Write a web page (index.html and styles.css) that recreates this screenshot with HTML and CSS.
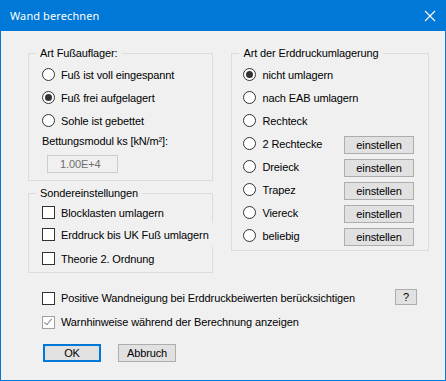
FILE: index.html
```html
<!DOCTYPE html>
<html lang="de">
<head>
    <meta charset="UTF-8">
    <title>Wand berechnen</title>
    <link rel="stylesheet" href="styles.css">
</head>
<body>
    <div class="window">
        <div class="titlebar">
            <span class="title">Wand berechnen</span>
            <svg class="close" width="12" height="12" viewBox="0 0 12 12">
                <path d="M1 1 L11 11 M11 1 L1 11" stroke="#fff" stroke-width="1.1" fill="none"/>
            </svg>
        </div>

        <div class="dialog">
            <div class="columns">
                <div class="col-left">
                    <fieldset class="group group-foot">
                        <legend>Art Fußauflager:</legend>
                        <div class="opt"><span class="radio"></span>Fuß ist voll eingespannt</div>
                        <div class="opt"><span class="radio checked"></span>Fuß frei aufgelagert</div>
                        <div class="opt"><span class="radio"></span>Sohle ist gebettet</div>
                        <div class="field-label">Bettungsmodul ks [kN/m²]:</div>
                        <div class="input disabled">1.00E+4</div>
                    </fieldset>

                    <fieldset class="group group-special">
                        <legend>Sondereinstellungen</legend>
                        <div class="opt"><span class="check"></span>Blocklasten umlagern</div>
                        <div class="opt overlap"><span class="check"></span>Erddruck bis UK Fuß umlagern</div>
                        <div class="opt"><span class="check"></span>Theorie 2. Ordnung</div>
                    </fieldset>
                </div>

                <fieldset class="group group-erd">
                    <legend>Art der Erddruckumlagerung</legend>
                    <div class="opt"><span class="radio checked"></span>nicht umlagern</div>
                    <div class="opt"><span class="radio"></span>nach EAB umlagern</div>
                    <div class="opt"><span class="radio"></span>Rechteck</div>
                    <div class="opt"><span class="radio"></span><span class="grow">2 Rechtecke</span><span class="btn btn-set">einstellen</span></div>
                    <div class="opt"><span class="radio"></span><span class="grow">Dreieck</span><span class="btn btn-set">einstellen</span></div>
                    <div class="opt"><span class="radio"></span><span class="grow">Trapez</span><span class="btn btn-set">einstellen</span></div>
                    <div class="opt"><span class="radio"></span><span class="grow">Viereck</span><span class="btn btn-set">einstellen</span></div>
                    <div class="opt"><span class="radio"></span><span class="grow">beliebig</span><span class="btn btn-set">einstellen</span></div>
                </fieldset>
            </div>

            <div class="extra">
                <div class="opt wide"><span class="check"></span><span class="grow">Positive Wandneigung bei Erddruckbeiwerten berücksichtigen</span><span class="btn btn-help">?</span></div>
                <div class="opt wide"><span class="check checked"></span>Warnhinweise während der Berechnung anzeigen</div>
            </div>

            <div class="actions">
                <span class="btn btn-main default">OK</span>
                <span class="btn btn-main">Abbruch</span>
            </div>
        </div>
    </div>
</body>
</html>
```

FILE: styles.css
```css
body {
    margin: 0;
    background: #f0f0f0;
    font-family: "Liberation Sans", Arial, sans-serif;
    font-size: 11px;
    letter-spacing: -0.12px;
    color: #000;
}
.window {
    width: 446px;
    height: 381px;
    box-sizing: border-box;
    border: 1px solid #0078d7;
    border-top: 0;
    background: #f0f0f0;
}
.titlebar {
    height: 31px;
    background: #0078d7;
    display: flex;
    align-items: center;
    justify-content: space-between;
    padding: 0 9px 0 9px;
    color: #fff;
}
.title {
    font-family: "Noto Sans", "Open Sans", sans-serif;
    font-size: 11px;
    letter-spacing: 0.1px;
}
.dialog {
    padding: 16px 16px 0 27px;
}
.columns {
    display: flex;
    align-items: flex-start;
    gap: 18px;
}
.col-left {
    width: 186px;
    display: flex;
    flex-direction: column;
    gap: 6px;
}
.group {
    margin: 0;
    border: 1px solid #dcdcdc;
    padding: 0 0 0 13px;
    min-width: 0;
}
.group legend {
    margin-left: -6px;
    padding: 0 4px;
    line-height: 13px;
}
.group-foot {
    padding-top: 3px;
    padding-bottom: 7px;
}
.group-special {
    padding-top: 1px;
    padding-bottom: 2px;
}
.group-erd {
    width: 198px;
    box-sizing: border-box;
    padding-left: 11px;
    padding-right: 14px;
    padding-top: 3px;
    padding-bottom: 3px;
}
.group-erd legend {
    margin-left: -4px;
}
.opt {
    height: 23px;
    display: flex;
    align-items: center;
}
/* the control is wider than its group box and hides part of the frame */
.opt.overlap {
    position: relative;
    margin-right: -2px;
    height: 21px;
    margin-top: -1px;
    padding-top: 1px;
    padding-bottom: 2px;
    background: #f0f0f0;
}
.grow {
    flex: 1;
}
.radio, .check {
    width: 13px;
    height: 13px;
    box-sizing: border-box;
    border: 1px solid #333;
    background: #fff;
    margin-right: 6px;
    flex: none;
    position: relative;
}
.radio {
    border-radius: 50%;
}
.radio.checked::after {
    content: "";
    position: absolute;
    left: 2px;
    top: 2px;
    width: 7px;
    height: 7px;
    border-radius: 50%;
    background: #333;
}
.check.checked {
    border-color: #a0a0a0;
}
.check.checked::after {
    content: "";
    position: absolute;
    left: 3px;
    top: 0px;
    width: 3px;
    height: 7px;
    border: solid #8a8a8a;
    border-width: 0 1px 1px 0;
    transform: rotate(40deg);
}
.field-label {
    margin-top: 3px;
    line-height: 13px;
}
.input {
    margin: 7px 0 0 5px;
    width: 71px;
    height: 18px;
    box-sizing: border-box;
    border: 1px solid #ccc;
    padding-left: 12px;
    line-height: 16px;
}
.input.disabled {
    color: #6d6d6d;
}
.btn {
    box-sizing: border-box;
    background: #e1e1e1;
    border: 1px solid #adadad;
    text-align: center;
}
.btn-set {
    width: 70px;
    height: 18px;
    line-height: 16px;
    margin-top: 2px;
}
.btn-help {
    width: 22px;
    height: 16px;
    line-height: 14px;
    margin-bottom: 2px;
}
.extra {
    margin-top: 13px;
}
.opt.wide {
    height: 24px;
    padding-left: 14px;
    padding-right: 12px;
}
.actions {
    margin-top: 10px;
    padding-left: 15px;
    display: flex;
    gap: 17px;
}
.btn-main {
    width: 58px;
    height: 18px;
    line-height: 16px;
}
.btn-main.default {
    border: 2px solid #0078d7;
    line-height: 14px;
}
```
